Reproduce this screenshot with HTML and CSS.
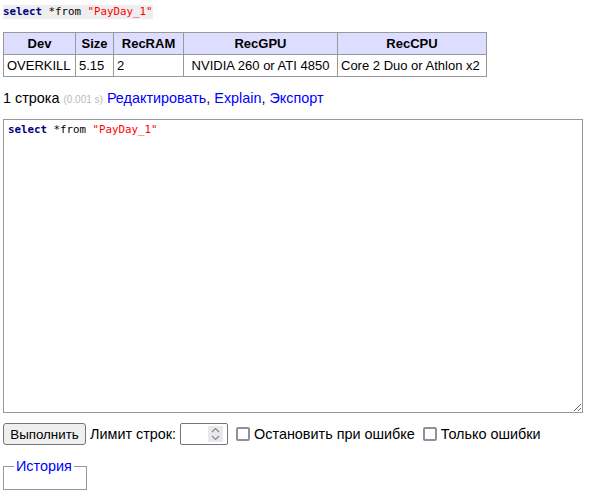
FILE: index.html
```html
<!DOCTYPE html>
<html>
<head>
<meta charset="utf-8">
<link rel="stylesheet" href="styles.css">
</head>
<body>
<p class="sql"><code class="code"><span class="kw">select</span> *from <span class="str">"PayDay_1"</span></code></p>
<table class="grid">
<colgroup><col class="c1"><col class="c2"><col class="c3"><col class="c4"><col class="c5"></colgroup>
<thead>
<tr><th>Dev</th><th>Size</th><th>RecRAM</th><th>RecGPU</th><th>RecCPU</th></tr>
</thead>
<tbody>
<tr><td>OVERKILL</td><td>5.15</td><td>2</td><td class="center">NVIDIA 260 or ATI 4850</td><td>Core 2 Duo or Athlon x2</td></tr>
</tbody>
</table>
<p class="info">1 строка <span class="time">(0.001 s)</span> <a href="#">Редактировать</a>, <a href="#">Explain</a>, <a href="#">Экспорт</a></p>
<div class="editor"><code class="code"><span class="kw">select</span> *from <span class="str">"PayDay_1"</span></code></div>
<div class="controls">
<button class="btn">Выполнить</button>
<label class="lbl">Лимит строк:
<span class="numbox"><input type="text" class="limit"><span class="spin"><svg width="9" height="14" viewBox="0 0 9 14"><path d="M1 5 L4.5 1.5 L8 5" fill="none" stroke="#888" stroke-width="1.2"/><path d="M1 9 L4.5 12.5 L8 9" fill="none" stroke="#888" stroke-width="1.2"/></svg></span></span>
</label>
<label class="lbl"><span class="cb"></span>Остановить при ошибке</label>
<label class="lbl"><span class="cb"></span>Только ошибки</label>
</div>
<fieldset class="history"><legend><a href="#">История</a></legend></fieldset>
</body>
</html>
```
FILE: styles.css
```css
html, body {
  margin: 0;
  background: #fff;
}
body {
  padding: 0 3px;
  font-family: "Liberation Sans", Arial, sans-serif;
  font-size: 14.4px;
  color: #000;
}
a {
  color: #00f;
  text-decoration: none;
}
.sql {
  margin: 5px 0 0;
  line-height: 14px;
  height: 14px;
}
.code {
  font-family: "DejaVu Sans Mono", monospace;
  font-size: 10.8px;
}
.sql .code {
  background: #eee;
  display: inline-block;
  vertical-align: top;
  padding: 0;
  line-height: 14px;
}
.kw {
  color: #000080;
  font-weight: bold;
}
.str {
  color: #f00;
}
.grid {
  border-collapse: collapse;
  table-layout: fixed;
  margin-top: 13px;
  font-size: 13px;
  width: 483px;
}
.c1 { width: 72px; }
.c2 { width: 38px; }
.c3 { width: 70px; }
.c4 { width: 154px; }
.c5 { width: 149px; }
.grid th, .grid td {
  border: 1px solid #999;
  padding: 0 3px;
  height: 22px;
  line-height: 15px;
  box-sizing: border-box;
  white-space: nowrap;
  overflow: hidden;
}
.grid th {
  background: #ddf;
  font-weight: bold;
  text-align: center;
}
.grid td { text-align: left; }
.grid td.center { text-align: center; }
.info {
  margin: 13px 0 0;
  line-height: 17px;
}
.time {
  color: #bbb;
  font-size: 10px;
}
.editor {
  box-sizing: border-box;
  margin-top: 11px;
  width: 580px;
  height: 294px;
  border: 1px solid #999;
  padding: 1px 4px;
  line-height: 14px;
  resize: both;
  overflow: auto;
}
.controls {
  margin: 9px 0 0;
  display: flex;
  align-items: center;
  height: 24px;
}
.lbl {
  display: flex;
  align-items: center;
}
.btn {
  font-family: "Liberation Sans", Arial, sans-serif;
  font-size: 13.33px;
  padding: 0 6px;
  height: 22px;
  width: 83px;
  border: 1px solid #767676;
  border-radius: 3px;
  background: #efefef;
  color: #000;
  margin-right: 4px;
}
.numbox {
  display: inline-flex;
  align-items: center;
  box-sizing: border-box;
  width: 48px;
  height: 22px;
  margin-left: 4px;
  border: 1px solid #767676;
  border-radius: 2px;
  padding: 2px 4px 2px 2px;
  background: #fff;
}
.limit {
  border: 0;
  outline: none;
  padding: 0;
  margin: 0;
  width: 24px;
  min-width: 0;
  height: 16px;
  flex: 1;
}
.spin {
  display: flex;
  align-items: center;
  justify-content: center;
  width: 15px;
  height: 16px;
  background: #e9e9ed;
  border-radius: 1px;
}
.cb {
  display: inline-block;
  box-sizing: border-box;
  width: 14px;
  height: 14px;
  border: 2px solid #8f8f9d;
  border-radius: 2px;
  margin: 0 4px 0 8px;
  background: #fff;
}
.history {
  margin: 12px 0 0;
  width: 84px;
  height: 32px;
  box-sizing: border-box;
  border: 1px solid #999;
  padding: 0 10px;
}
.history legend {
  padding: 0 2px;
  line-height: 16px;
}
```
